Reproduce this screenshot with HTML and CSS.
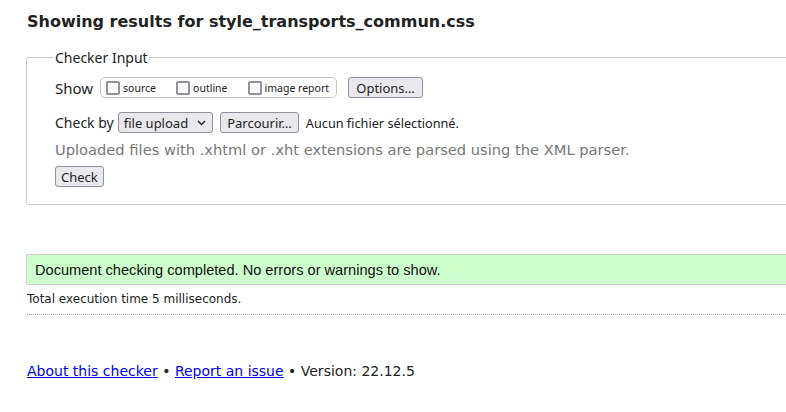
FILE: index.html
```html
<!DOCTYPE html>
<html>
<head>
<meta charset="utf-8">
<link rel="stylesheet" href="styles.css">
</head>
<body>
<div class="page">
  <h2 class="title">Showing results for style_transports_commun.css</h2>
  <fieldset class="input">
    <legend class="legend">Checker Input</legend>
    <div class="row show-row">
      <span class="lbl show">Show</span>
      <span class="boxes">
        <label class="opt"><span class="cb"></span>source</label>
        <label class="opt"><span class="cb"></span>outline</label>
        <label class="opt"><span class="cb"></span>image report</label>
      </span>
      <span class="btn options">Options…</span>
    </div>
    <div class="row check-row">
      <span class="lbl">Check by</span>
      <span class="select">file upload <svg class="chev" width="9" height="6" viewBox="0 0 9 6"><path d="M1 1 L4.5 4.5 L8 1" fill="none" stroke="#222" stroke-width="1.4"/></svg></span>
      <span class="btn browse">Parcourir…</span>
      <span class="nofile">Aucun fichier sélectionné.</span>
    </div>
    <p class="hint">Uploaded files with .xhtml or .xht extensions are parsed using the XML parser.</p>
    <div class="row"><span class="btn check">Check</span></div>
  </fieldset>
  <div class="success">Document checking completed. No errors or warnings to show.</div>
  <p class="time">Total execution time 5 milliseconds.</p>
  <p class="footer"><a href="#">About this checker</a> • <a href="#">Report an issue</a> • Version: 22.12.5</p>
</div>
</body>
</html>
```
FILE: styles.css
```css
html { overflow: hidden; }
body { margin: 0; background: #fff; color: #222; font-family: "DejaVu Sans", sans-serif; }
.page { width: 820px; padding: 12px 0 0 26px; }
.title { font-size: 16px; font-weight: bold; margin: 0 0 16px 1px; color: #222; line-height: 20px; }
.input { border: 1px solid #ccc; border-radius: 3px; margin: 0; padding: 10px 0 17px 28px; }
.legend { font-family: "Noto Sans", sans-serif; font-size: 14px; padding: 0 1px; margin-left: -1px; color: #222; }
.row { display: flex; align-items: center; font-family: "Noto Sans", sans-serif; font-size: 13px; }
.show-row { margin-top: 0; }
.check-row { margin-top: 14px; }
.lbl { font-size: 14px; margin-right: 4px; }
.lbl.show { font-size: 15px; margin-right: 7px; }
.boxes { display: flex; align-items: center; border: 1px solid #c4c4c4; border-radius: 5px; height: 19px; width: 225px; padding: 0 5px; margin-right: 11px; font-size: 10.5px; }
.opt { display: flex; align-items: center; margin-right: 20px; }
.opt:last-child { margin-right: 0; }
.cb { width: 10px; height: 10px; border: 2px solid #8f8f9d; border-radius: 2px; margin-right: 3px; }
.btn { display: inline-flex; align-items: center; background: #e9e9ed; border: 1px solid #8f8f9d; border-radius: 3px; height: 19px; padding: 0 6px; font-size: 13px; }
.options { width: 61px; justify-content: center; }
.select { display: inline-flex; align-items: center; background: #e9e9ed; border: 1px solid #8f8f9d; border-radius: 3px; height: 19px; padding: 0 6px 0 5px; margin-right: 7px; }
.chev { margin-left: 9px; }
.nofile { margin-left: 7px; font-size: 12.7px; }
.hint { margin: 8px 0 8px; font-size: 14.67px; color: #777; }
.check { padding: 0 5px; }
.success { margin-top: 49px; background: #ccffcc; border-top: 1px solid #ccc; border-bottom: 1px solid #ccc; border-left: 1px solid #ccc; border-radius: 2px 0 0 2px; padding: 7px 8px 6px; font-family: "Liberation Sans", sans-serif; font-size: 14.6px; color: #111; }
.time { margin: 7px 0 0 1px; font-size: 12px; padding-bottom: 8px; border-bottom: 1px dotted #aaa; }
.footer { margin: 48px 0 0 1px; font-size: 14px; }
.footer a { color: #00e; }
```
